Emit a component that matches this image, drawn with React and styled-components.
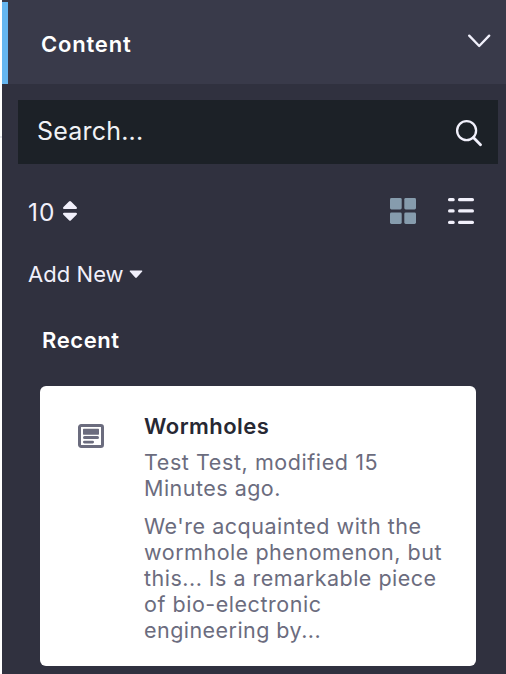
import React from "react";
import styled, { createGlobalStyle } from "styled-components";

const GlobalStyle = createGlobalStyle`
  * { box-sizing: border-box; }
  body { margin: 0; background: #fff; overflow: hidden; font-family: Inter, "Liberation Sans", sans-serif; }
  p, h1, h2, h3 { margin: 0; }
  svg { display: block; flex: none; }
`;

const Page = styled.div`
  display: flex;
  width: 506px;
  height: 674px;
`;

const Gutter = styled.div`
  width: 2px;
  padding-top: 136px;
  &::before { content: ""; display: block; height: 2px; background: #e7e7ed; }
`;

const Sidebar = styled.aside`
  flex: 1;
  background: #30313f;
`;

const Header = styled.header`
  display: flex;
  align-items: center;
  height: 84px;
  padding: 0 15px 0 0;
  background: #393a4a;
`;

const ActiveMark = styled.div`
  width: 6px;
  height: 82px;
  margin: 2px 33px 0 0;
  background: #65b6f0;
`;

const HeaderRow = styled.div`
  display: flex;
  flex: 1;
  align-items: flex-start;
  justify-content: space-between;
  height: 26px;
  padding-top: 2px;
  svg { margin-top: 3px; }
`;

const Label = styled.span`
  flex: ${(p) => (p.$grow ? 1 : "none")};
  color: ${(p) => p.$color || "#f1f2f5"};
  font-size: ${(p) => p.$size || 22}px;
  font-weight: ${(p) => p.$weight || 400};
  letter-spacing: ${(p) => p.$spacing || 0}px;
  line-height: 26px;
  white-space: nowrap;
`;

const SearchBox = styled.div`
  display: flex;
  align-items: center;
  height: 64px;
  margin: 16px 8px 0 16px;
  padding: 0 16px 2px 19px;
  background: #1c2127;
  svg { margin-top: 4px; }
`;

const Toolbar = styled.div`
  display: flex;
  align-items: center;
  height: 30px;
  margin-top: 32px;
  padding: 0 31px 0 26px;
`;

const PageSize = styled.div`
  display: flex;
  align-items: center;
  justify-content: space-between;
  width: 50px;
  svg { margin-bottom: 1px; }
  padding-top: 1px;
`;

const Views = styled.div`
  display: flex;
  gap: 30px;
  margin-left: auto;
`;

const AddNew = styled.div`
  display: flex;
  align-items: center;
  gap: 5px;
  height: 26px;
  margin: 35px 0 0 26px;
`;

const SectionTitle = styled.div`
  display: flex;
  height: 26px;
  margin: 40px 0 0 40px;
`;

const Card = styled.article`
  display: flex;
  width: 436px;
  height: 280px;
  margin: 33px 0 0 38px;
  padding: 27px 20px 0 38px;
  border-radius: 6px;
  background: #fff;
`;

const CardIcon = styled.div`
  width: 66px;
  padding-top: 11px;
`;

const CardText = styled.div`
  display: flex;
  flex-direction: column;
`;

const Lines = styled.div`
  display: flex;
  flex-direction: column;
  margin-top: ${(p) => p.$gap}px;
`;

const meta = [
  ["Test Test, modified 15", 0.58],
  ["Minutes ago.", 0.48],
];
const summary = [
  ["We're acquainted with the", 0.51],
  ["wormhole phenomenon, but", 0.52],
  ["this... Is a remarkable piece", 0.49],
  ["of bio-electronic", 0.53],
  ["engineering by...", 0.45],
];

function TextLines({ lines, gap }) {
  return (
    <Lines $gap={gap}>
      {lines.map(([text, spacing]) => (
        <Label key={text} $color="#6b6c7e" $size={21.5} $spacing={spacing}>{text}</Label>
      ))}
    </Lines>
  );
}

const Chevron = () => (
  <svg width="24" height="14" viewBox="0 0 24 14" fill="none" stroke="#f1f0fb" strokeWidth="2.3" strokeLinecap="round" strokeLinejoin="round">
    <path d="M2.2 1.6L12.2 12L22.2 1.6" />
  </svg>
);

const SearchIcon = () => (
  <svg width="28" height="28" viewBox="0 0 28 28" fill="none" stroke="#f1f0fb" strokeWidth="2.3" strokeLinecap="round">
    <circle cx="12.6" cy="11.6" r="9.5" />
    <path d="M19.4 18.6L26.5 25.8" strokeWidth="2.8" />
  </svg>
);

const SortIcon = () => (
  <svg width="16" height="22" viewBox="0 0 16 22" fill="#f1f0fb">
    <path d="M7 1.6Q8 .6 9 1.6L14.8 7.2Q15.6 9 14 9H2Q.4 9 1.2 7.2Z" />
    <path d="M7 20.2Q8 21.2 9 20.2L14.8 14.6Q15.6 12.8 14 12.8H2Q.4 12.8 1.2 14.6Z" />
  </svg>
);

const Caret = () => (
  <svg width="14" height="9" viewBox="0 0 14 9" fill="#f1f0fb">
    <path d="M1.2 .5H12.8Q14 .8 13 1.8L7.8 7.5Q7 8.3 6.2 7.5L1 1.8Q0 .8 1.2 .5Z" />
  </svg>
);

const GridIcon = () => (
  <svg width="28" height="28" viewBox="0 0 28 28" fill="#869cad">
    <rect x="1" y="1" width="11.7" height="11.5" rx="1.4" />
    <rect x="15.3" y="1" width="11.7" height="11.5" rx="1.4" />
    <rect x="1" y="15.5" width="11.7" height="11.5" rx="1.4" />
    <rect x="15.3" y="15.5" width="11.7" height="11.5" rx="1.4" />
  </svg>
);

const ListIcon = () => (
  <svg width="28" height="28" viewBox="0 0 28 28" fill="#f1f0fb">
    {[1, 12.3, 23.7].map((y) => (
      <React.Fragment key={y}>
        <rect x="1" y={y} width="6.7" height="3.3" rx="1.6" />
        <rect x="11" y={y} width="16" height="3.3" rx="1.6" />
      </React.Fragment>
    ))}
  </svg>
);

const ArticleIcon = () => (
  <svg width="26" height="24" viewBox="0 0 26 24" fill="#6b6c7e">
    <rect x="1.5" y="1.5" width="23" height="21" rx="1.7" fill="none" stroke="#6b6c7e" strokeWidth="3" />
    <rect x="5" y="4.7" width="16" height="6" rx=".6" />
    <rect x="5" y="12" width="16" height="3" rx="1.5" />
    <rect x="5" y="16.7" width="11" height="2.7" rx="1.3" />
  </svg>
);

export default function App() {
  return (
    <>
      <GlobalStyle />
      <Page>
        <Gutter />
        <Sidebar>
          <Header>
            <ActiveMark />
            <HeaderRow>
              <Label as="h1" $grow $color="#fff" $weight={600} $spacing={0.8}>Content</Label>
              <Chevron />
            </HeaderRow>
          </Header>
          <SearchBox>
            <Label $grow $size={25} $spacing={0.2}>Search...</Label>
            <SearchIcon />
          </SearchBox>
          <Toolbar>
            <PageSize>
              <Label $size={24.5} $color="#f1f0fb" $spacing={1}>10</Label>
              <SortIcon />
            </PageSize>
            <Views>
              <GridIcon />
              <ListIcon />
            </Views>
          </Toolbar>
          <AddNew>
            <Label $color="#f1f0fb" $spacing={0.05}>Add New</Label>
            <Caret />
          </AddNew>
          <SectionTitle>
            <Label as="h2" $color="#fff" $weight={600} $spacing={0.6}>Recent</Label>
          </SectionTitle>
          <Card>
            <CardIcon><ArticleIcon /></CardIcon>
            <CardText>
              <Label as="h3" $color="#272833" $weight={600} $spacing={0.45}>Wormholes</Label>
              <TextLines lines={meta} gap={10} />
              <TextLines lines={summary} gap={12} />
            </CardText>
          </Card>
        </Sidebar>
      </Page>
    </>
  );
}
